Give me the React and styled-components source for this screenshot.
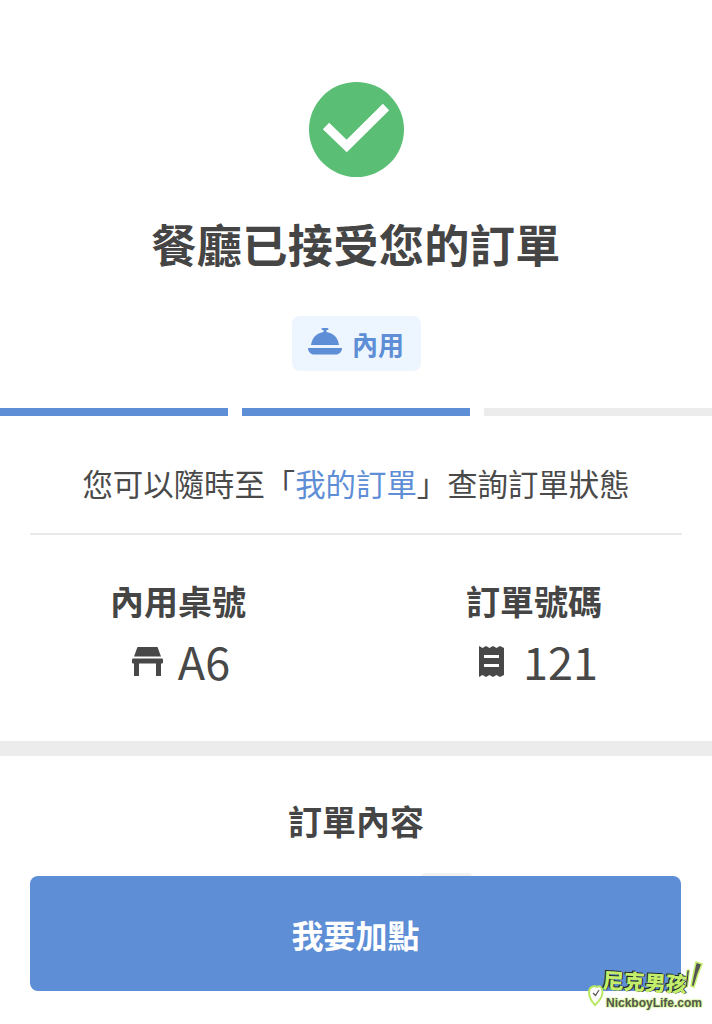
import React from "react";
import styled, { createGlobalStyle } from "styled-components";

const Global = createGlobalStyle`
  html, body { margin: 0; padding: 0; background: #fff; }
  body { font-family: "Noto Sans CJK TC", "Noto Sans", sans-serif; color: #4a4a4a; }
`;

const Page = styled.div`
  position: relative;
  width: 712px;
  height: 1024px;
  overflow: hidden;
  background: #fff;
  display: flex;
  flex-direction: column;
`;

const Hero = styled.section`
  display: flex;
  flex-direction: column;
  align-items: center;
  padding-top: 82px;
`;

const Title = styled.h1`
  margin: 27px 0 0;
  height: 82px;
  line-height: 79px;
  font-size: 45.2px;
  font-weight: 700;
  letter-spacing: 0.3px;
  color: #454545;
`;

const Tag = styled.div`
  margin-top: 30px;
  width: 129px;
  height: 55px;
  border-radius: 8px;
  background: #edf5fe;
  color: #5e8ed6;
  display: flex;
  align-items: center;
  justify-content: center;
  gap: 10px;
  font-size: 26px;
  font-weight: 700;
  line-height: 51px;
`;

const Bell = styled.svg`
  margin-top: -4px;
`;

const Progress = styled.div`
  margin-top: 37px;
  display: grid;
  grid-template-columns: repeat(3, 1fr);
  gap: 14px;
`;

const Step = styled.div`
  height: 8px;
  background: ${(p) => (p.$active ? "#5e8ed6" : "#ececec")};
`;

const Notice = styled.p`
  margin: 0 30px;
  height: 119px;
  line-height: 134px;
  box-sizing: border-box;
  border-bottom: 2px solid #e9e9e9;
  text-align: center;
  font-size: 30.4px;
  white-space: nowrap;
  color: #4a4a4a;
`;

const Link = styled.span`
  color: #5e8ed6;
`;

const Stats = styled.section`
  display: grid;
  grid-template-columns: 1fr 1fr;
  height: 206px;
  border-bottom: 15px solid #ececec;
  box-sizing: content-box;
`;

const Stat = styled.div`
  display: flex;
  flex-direction: column;
  align-items: center;
  padding-top: 41px;
`;

const StatLabel = styled.div`
  font-size: 34px;
  line-height: 50px;
  font-weight: 700;
  color: #454545;
`;

const StatValue = styled.div`
  margin-top: 7px;
  padding-left: ${(p) => p.$indent}px;
  display: flex;
  align-items: center;
  gap: ${(p) => p.$gap}px;
  font-size: 45px;
  font-weight: 400;
  line-height: 56px;
  color: #484848;
`;

const SectionTitle = styled.h2`
  margin: 40px 0 0;
  text-align: center;
  font-size: 34px;
  line-height: 50px;
  font-weight: 700;
  color: #454545;
`;

const Footer = styled.div`
  position: absolute;
  left: 30px;
  right: 31px;
  top: 876px;
`;

const Bump = styled.div`
  position: absolute;
  left: 390px;
  top: -3px;
  width: 54px;
  height: 6px;
  border-radius: 6px 6px 0 0;
  background: #f1f1f1;
`;

const CTA = styled.button`
  position: relative;
  display: block;
  width: 100%;
  height: 115px;
  border: 0;
  border-radius: 8px;
  background: #5e8ed6;
  color: #fff;
  font-family: inherit;
  font-size: 32px;
  font-weight: 700;
  padding: 0;
`;

const Watermark = styled.div`
  position: absolute;
  left: 587px;
  top: 962px;
  width: 120px;
  height: 50px;
`;

const MarkTitle = styled.span`
  position: absolute;
  left: 16px;
  top: 4px;
  font-size: 21px;
  line-height: 26px;
  font-weight: 900;
  white-space: nowrap;
  color: #c3ee6c;
  text-shadow: -1px -1px 0 #222, 1px 0 0 #222;
  transform: rotate(3deg);
  transform-origin: left center;
`;

const MarkUrl = styled.span`
  position: absolute;
  left: 19px;
  top: 34px;
  font-family: "Liberation Sans", sans-serif;
  font-size: 12px;
  line-height: 14px;
  font-weight: 700;
  white-space: nowrap;
  color: #555;
  text-shadow: 0 0 2px #c3ee6c, 0 0 2px #c3ee6c, 0 0 1px #c3ee6c;
`;

const MarkSvg = styled.svg`
  position: absolute;
  left: 0;
  top: 0;
  overflow: visible;
`;

const CheckBadge = () => (
  <svg width="95" height="95" viewBox="0 0 95 95">
    <circle cx="47.5" cy="47.5" r="47.5" fill="#5abf74" />
    <path d="M17 44 L37.700 64 L77 25" fill="none" stroke="#fff" strokeWidth="9" />
  </svg>
);

const BellIcon = () => (
  <Bell width="34" height="28" viewBox="0 0 34 28" fill="#5e8ed6">
    <rect x="15.500" y="1" width="3" height="4" />
    <rect x="13.500" y="0" width="7" height="2" rx="1" />
    <path d="M3 17 C4 9 10 4 17 4 C24 4 30 9 31 17 Z" />
    <path d="M0 20 H34 C34 24 31 26.500 28 26.500 H6 C3 26.500 0 24 0 20 Z" />
  </Bell>
);

const TableIcon = () => (
  <svg width="31" height="29" viewBox="0 0 31 29" fill="#484848">
    <path d="M5.500 0 H25.500 L29 9.500 H2 Z" />
    <rect x="0" y="11.500" width="31" height="5" rx="1" />
    <rect x="2" y="16" width="5" height="13" />
    <rect x="24" y="16" width="5" height="13" />
  </svg>
);

const ReceiptIcon = () => (
  <svg width="27" height="31" viewBox="0 0 27 31" fill="#484848" fillRule="evenodd">
    <path d="M1 0 L4.500 2 L8 0 L11.500 2 L15 0 L18.500 2 L22 0 L26 2 V29 L22 31 L18.500 29 L15 31 L11.500 29 L8 31 L4.500 29 L1 31 Z M6 9 V12 H21 V9 Z M6 18 V21 H21 V18 Z" />
  </svg>
);

export default function App() {
  return (
    <Page>
      <Global />
      <Hero>
        <CheckBadge />
        <Title>餐廳已接受您的訂單</Title>
        <Tag>
          <BellIcon />
          內用
        </Tag>
      </Hero>
      <Progress>
        <Step $active />
        <Step $active />
        <Step />
      </Progress>
      <Notice>
        您可以隨時至「<Link>我的訂單</Link>」查詢訂單狀態
      </Notice>
      <Stats>
        <Stat>
          <StatLabel>內用桌號</StatLabel>
          <StatValue $gap={15} $indent={6}>
            <TableIcon />
            A6
          </StatValue>
        </Stat>
        <Stat>
          <StatLabel>訂單號碼</StatLabel>
          <StatValue $gap={18} $indent={8}>
            <ReceiptIcon />
            121
          </StatValue>
        </Stat>
      </Stats>
      <SectionTitle>訂單內容</SectionTitle>
      <Footer>
        <Bump />
        <CTA>我要加點</CTA>
      </Footer>
      <Watermark>
        <MarkSvg width="120" height="50" viewBox="0 0 120 50">
          <path d="M2 30 C2 25 7 23 10 25 C13 23 16 26 15.500 31 C15 37 10 41 8 43 C5 40 2 36 2 30 Z" fill="#fff" stroke="#b8e860" strokeWidth="2" />
          <path d="M6 31 L8.500 33.500 L12 28" fill="none" stroke="#555" strokeWidth="1.200" />
          <path d="M107 9 L109 0 L115 2 L111 12 L107 25 L104 24 Z" fill="#555" stroke="#c3ee6c" strokeWidth="1.500" />
          <path d="M100 8 L102.500 8 L100.500 25 L98 25 Z" fill="#555" stroke="#c3ee6c" strokeWidth="1" />
        </MarkSvg>
        <MarkTitle>尼克男孩</MarkTitle>
        <MarkUrl>NickboyLife.com</MarkUrl>
      </Watermark>
    </Page>
  );
}
